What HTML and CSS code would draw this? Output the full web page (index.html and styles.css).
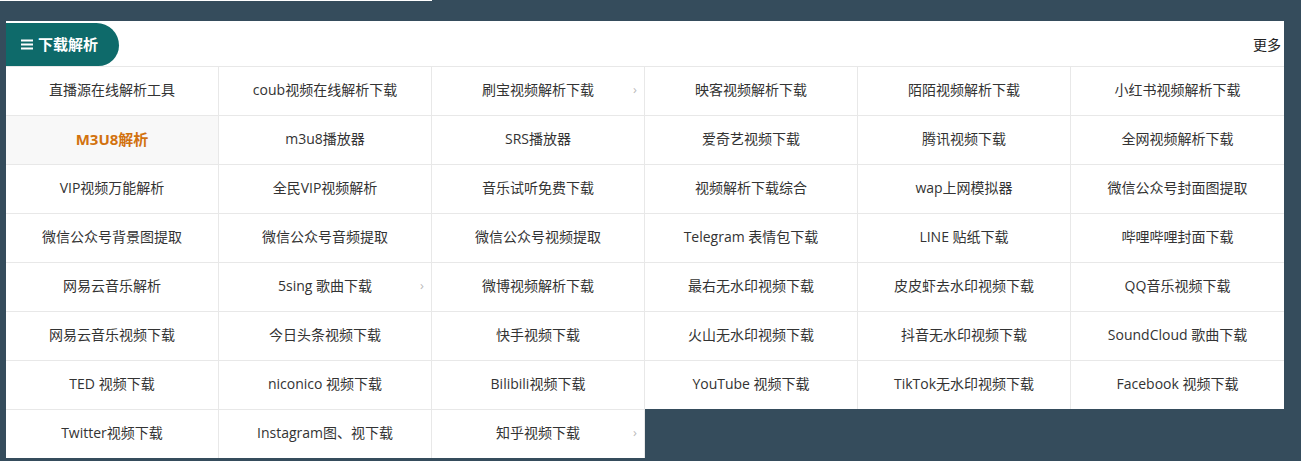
FILE: index.html
```html
<!DOCTYPE html>
<html lang="zh-CN">
<head>
    <meta charset="UTF-8">
    <title>下载解析</title>
    <link rel="stylesheet" href="styles.css">
</head>
<body>

<div class="top-line"></div>

<div class="panel">
    <div class="panel-head">
        <div class="tab">
            <svg class="menu-icon" width="12" height="11" viewBox="0 0 12 11"><rect x="0" y="0.5" width="12" height="2" fill="#fff"/><rect x="0" y="4.5" width="12" height="2" fill="#fff"/><rect x="0" y="8.5" width="12" height="2" fill="#fff"/></svg>
            下载解析
        </div>
        <a class="more" href="#">更多</a>
    </div>

    <div class="grid">
        <a class="cell" href="#">直播源在线解析工具</a>
        <a class="cell" href="#">coub视频在线解析下载</a>
        <a class="cell has-arrow" href="#">刷宝视频解析下载</a>
        <a class="cell" href="#">映客视频解析下载</a>
        <a class="cell" href="#">陌陌视频解析下载</a>
        <a class="cell" href="#">小红书视频解析下载</a>

        <a class="cell active" href="#">M3U8解析</a>
        <a class="cell" href="#">m3u8播放器</a>
        <a class="cell" href="#">SRS播放器</a>
        <a class="cell" href="#">爱奇艺视频下载</a>
        <a class="cell" href="#">腾讯视频下载</a>
        <a class="cell" href="#">全网视频解析下载</a>

        <a class="cell" href="#">VIP视频万能解析</a>
        <a class="cell" href="#">全民VIP视频解析</a>
        <a class="cell" href="#">音乐试听免费下载</a>
        <a class="cell" href="#">视频解析下载综合</a>
        <a class="cell" href="#">wap上网模拟器</a>
        <a class="cell" href="#">微信公众号封面图提取</a>

        <a class="cell" href="#">微信公众号背景图提取</a>
        <a class="cell" href="#">微信公众号音频提取</a>
        <a class="cell" href="#">微信公众号视频提取</a>
        <a class="cell" href="#">Telegram 表情包下载</a>
        <a class="cell" href="#">LINE 贴纸下载</a>
        <a class="cell" href="#">哔哩哔哩封面下载</a>

        <a class="cell" href="#">网易云音乐解析</a>
        <a class="cell has-arrow" href="#">5sing 歌曲下载</a>
        <a class="cell" href="#">微博视频解析下载</a>
        <a class="cell" href="#">最右无水印视频下载</a>
        <a class="cell" href="#">皮皮虾去水印视频下载</a>
        <a class="cell" href="#">QQ音乐视频下载</a>

        <a class="cell" href="#">网易云音乐视频下载</a>
        <a class="cell" href="#">今日头条视频下载</a>
        <a class="cell" href="#">快手视频下载</a>
        <a class="cell" href="#">火山无水印视频下载</a>
        <a class="cell" href="#">抖音无水印视频下载</a>
        <a class="cell" href="#">SoundCloud 歌曲下载</a>

        <a class="cell" href="#">TED 视频下载</a>
        <a class="cell" href="#">niconico 视频下载</a>
        <a class="cell" href="#">Bilibili视频下载</a>
        <a class="cell" href="#">YouTube 视频下载</a>
        <a class="cell" href="#">TikTok无水印视频下载</a>
        <a class="cell" href="#">Facebook 视频下载</a>

        <a class="cell" href="#">Twitter视频下载</a>
        <a class="cell" href="#">Instagram图、视下载</a>
        <a class="cell has-arrow" href="#">知乎视频下载</a>
    </div>
</div>

</body>
</html>
```

FILE: styles.css
```css
body {
    margin: 0;
    padding: 0;
    background-color: #354c5c;
    font-family: 'Open Sans', 'Noto Sans CJK SC', sans-serif;
    font-size: 14px;
    color: #333;
}

.top-line {
    width: 432px;
    height: 1px;
    background-color: #fff;
}

.panel {
    width: 1278px;
    margin: 20px 0 0 6px;
}

.panel-head {
    height: 45px;
    background-color: #fff;
    display: flex;
    align-items: center;
    justify-content: space-between;
}

.tab {
    height: 43px;
    width: 113px;
    box-sizing: border-box;
    margin-top: 1px;
    padding-left: 15px;
    padding-bottom: 2px;
    display: flex;
    align-items: center;
    gap: 5px;
    background-color: #0e6a6a;
    color: #fff;
    font-family: 'Noto Sans CJK SC', sans-serif;
    font-weight: bold;
    font-size: 15px;
    border-radius: 0 24px 22px 0;
}

.menu-icon {
    margin-top: 2px;
}

.more {
    color: #222;
    text-decoration: none;
    font-family: 'Noto Sans CJK SC', sans-serif;
    margin-right: 3px;
}

.grid {
    display: grid;
    grid-template-columns: repeat(6, 213px);
}

.cell {
    position: relative;
    height: 49px;
    box-sizing: border-box;
    padding-bottom: 4px;
    border-top: 1px solid #e8e8e8;
    border-right: 1px solid #e8e8e8;
    background-color: #fff;
    display: flex;
    align-items: center;
    justify-content: center;
    color: #333;
    text-decoration: none;
}

.cell:nth-child(6n) {
    border-right: none;
}

.cell.active {
    background-color: #f8f8f8;
    color: #d2720f;
    font-weight: bold;
    font-size: 15px;
}

.has-arrow::after {
    content: '›';
    position: absolute;
    right: 7px;
    top: 13px;
    color: #bbb;
    font-size: 13px;
}
```
